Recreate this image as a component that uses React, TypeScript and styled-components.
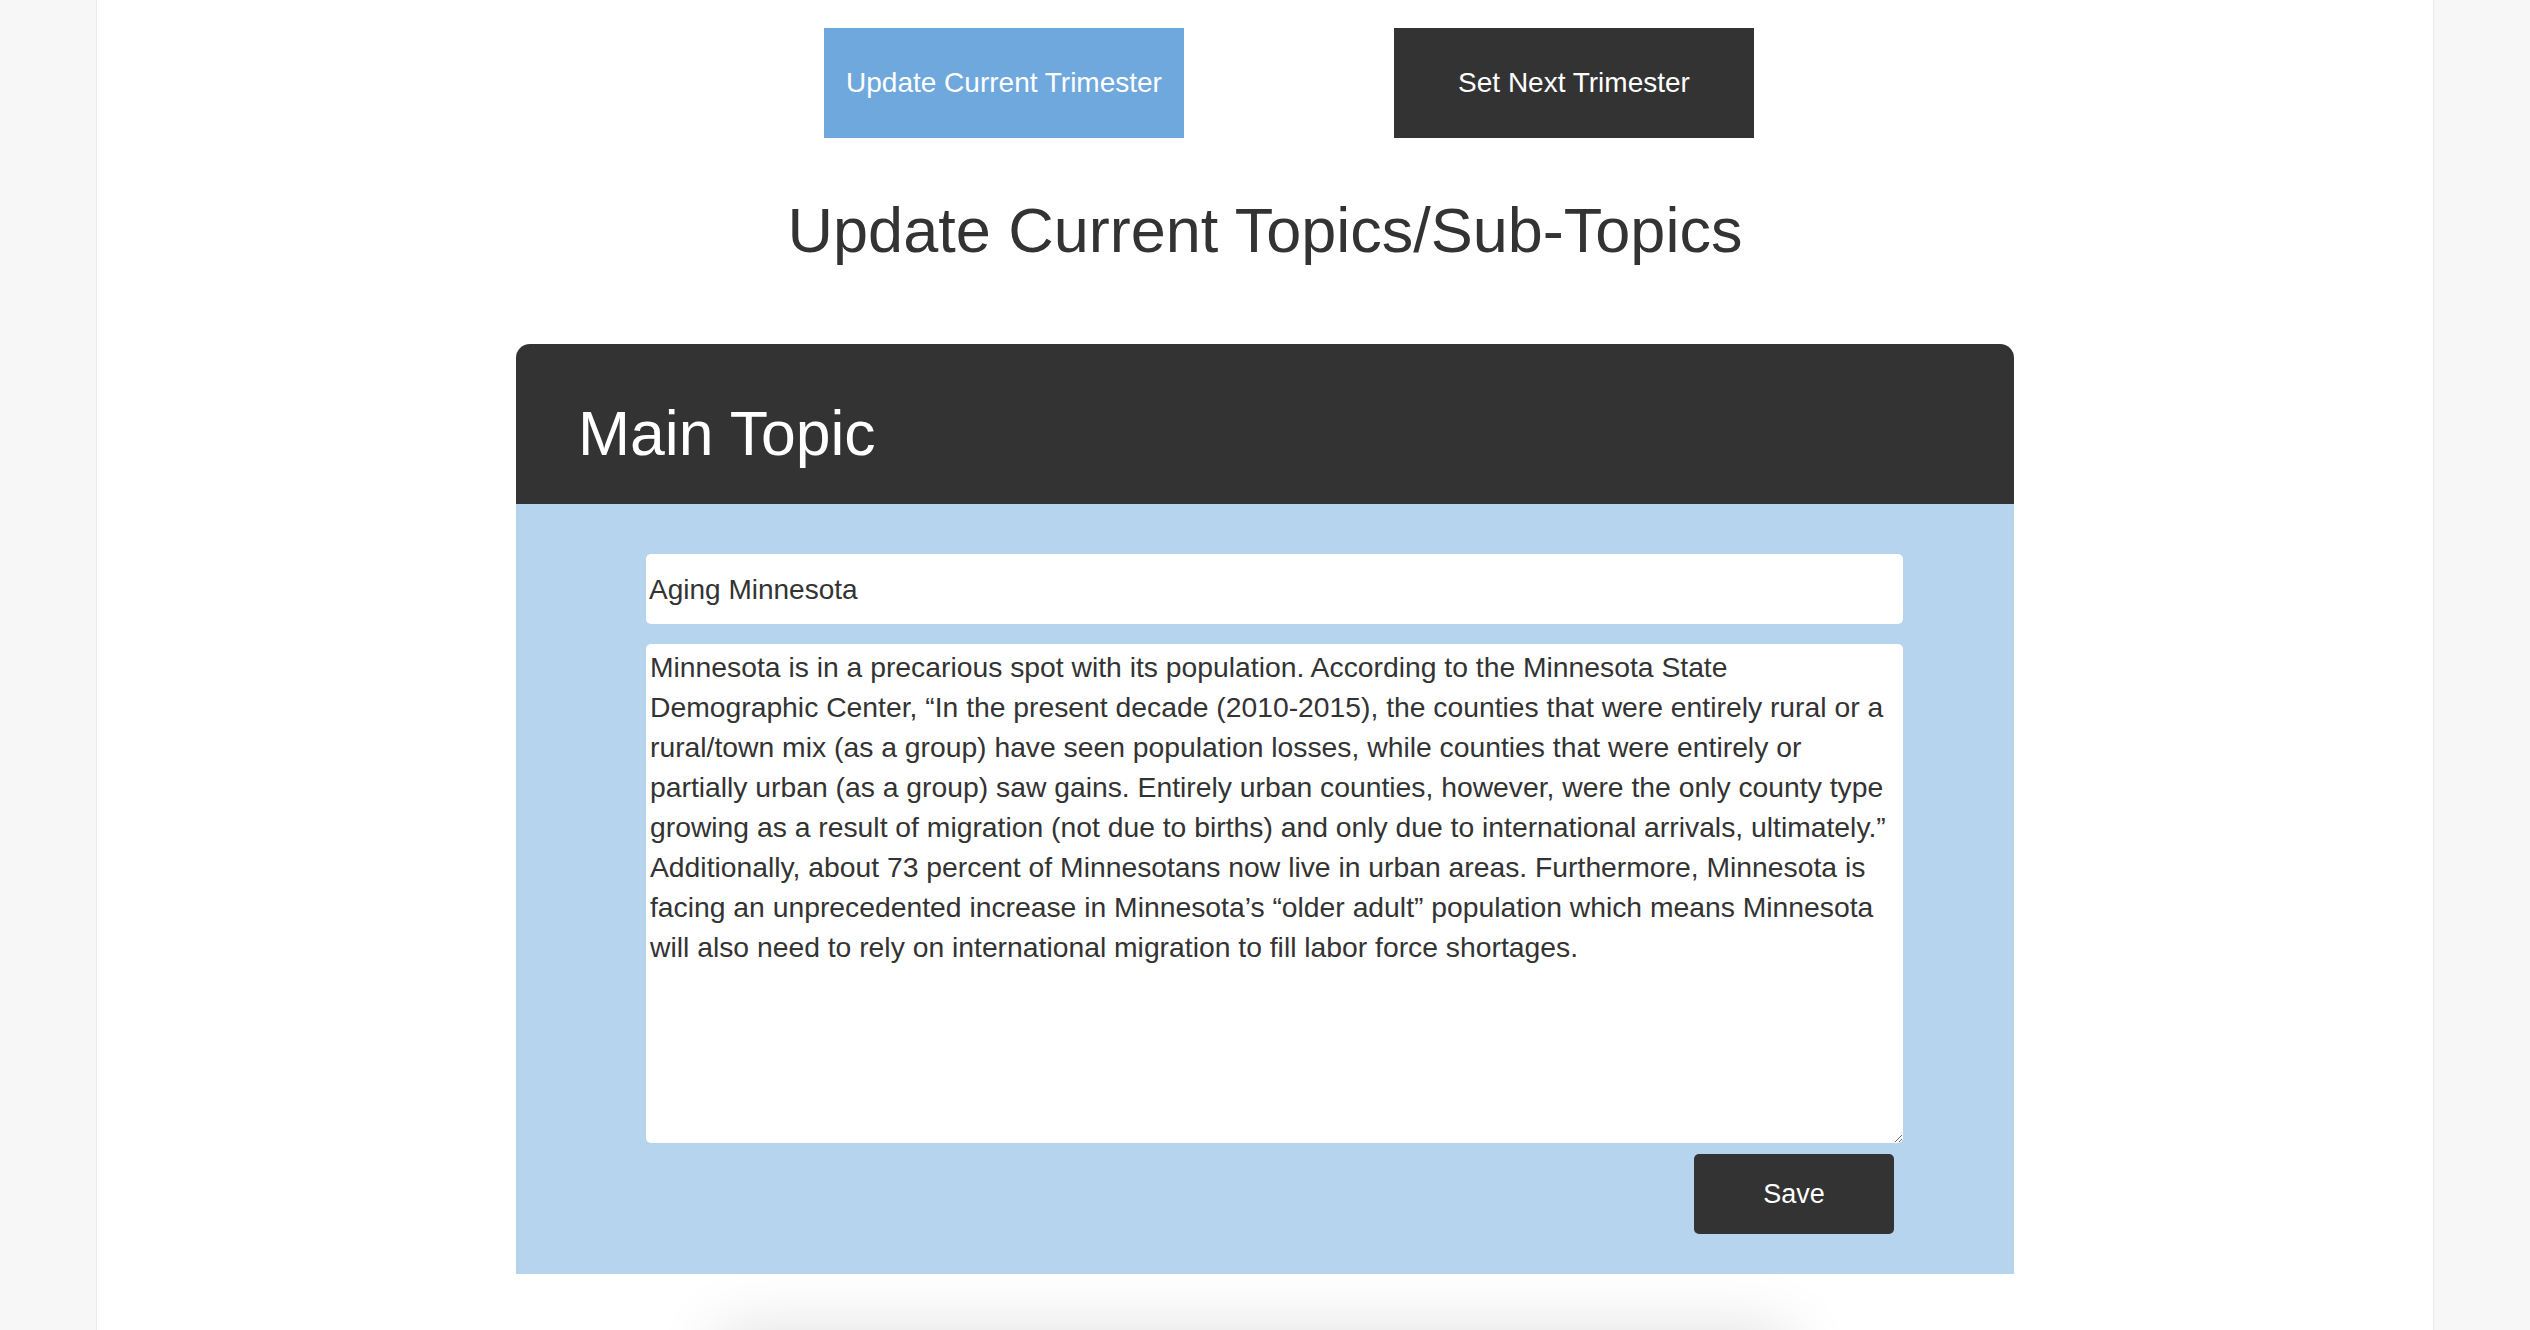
import React from "react";
import styled, { createGlobalStyle } from "styled-components";

const GlobalStyle = createGlobalStyle`
  html, body {
    margin: 0;
    padding: 0;
    background: #f7f7f7;
    font-family: "Liberation Sans", Arial, Helvetica, sans-serif;
    color: #333333;
  }
  * { box-sizing: border-box; }
`;

const Page = styled.div`
  width: 2338px;
  margin: 0 auto;
  min-height: 1600px;
  background: #ffffff;
  border-left: 1px solid #ebebeb;
  border-right: 1px solid #ebebeb;
  display: flex;
  flex-direction: column;
  align-items: center;
  padding-top: 28px;
`;

const ButtonRow = styled.div`
  display: flex;
  justify-content: center;
  gap: 210px;
  padding-left: 48px;
  align-self: stretch;
`;

const TrimesterButton = styled.button<{ $active?: boolean }>`
  width: 360px;
  height: 110px;
  border: none;
  border-radius: 0;
  background: ${(p) => (p.$active ? "#6fa8dc" : "#333333")};
  color: #ffffff;
  font-family: "Liberation Sans", Arial, Helvetica, sans-serif;
  font-size: 28px;
  cursor: pointer;
`;

const Heading = styled.h1`
  margin: 61px 0 0;
  font-size: 63px;
  line-height: 63px;
  font-weight: 400;
  color: #333333;
  text-align: center;
`;

const Panel = styled.section`
  position: relative;
  z-index: 1;
  width: 1498px;
  margin-top: 82px;
  display: flex;
  flex-direction: column;
`;

const PanelHeader = styled.header`
  height: 160px;
  background: #333333;
  border-radius: 14px 14px 0 0;
  padding: 58px 62px 0;
`;

const PanelTitle = styled.h2`
  margin: 0;
  font-size: 62.5px;
  line-height: 62.5px;
  font-weight: 400;
  color: #ffffff;
`;

const PanelBody = styled.form`
  background: #b6d4ee;
  padding: 50px 111px 40px 130px;
  display: flex;
  flex-direction: column;
`;

const TitleInput = styled.input`
  width: 100%;
  height: 70px;
  border: none;
  border-radius: 5px;
  background: #ffffff;
  padding: 2px 3px 0;
  font-family: "Liberation Sans", Arial, Helvetica, sans-serif;
  font-size: 28px;
  color: #333333;
  outline: none;
`;

const BodyText = styled.textarea`
  width: 100%;
  height: 499px;
  margin-top: 20px;
  border: none;
  border-radius: 5px;
  background: #ffffff;
  padding: 3px 9px 3px 4px;
  font-family: "Liberation Sans", Arial, Helvetica, sans-serif;
  font-size: 28.3px;
  line-height: 40px;
  color: #333333;
  outline: none;
  resize: vertical;
  overflow: hidden;
`;

const Actions = styled.div`
  display: flex;
  justify-content: flex-end;
  padding-right: 9px;
  margin-top: 11px;
`;

const SaveButton = styled.button`
  width: 200px;
  height: 80px;
  border: none;
  border-radius: 5px;
  background: #333333;
  color: #ffffff;
  font-family: "Liberation Sans", Arial, Helvetica, sans-serif;
  font-size: 27px;
  cursor: pointer;
`;

const NextCard = styled.div`
  width: 1070px;
  height: 400px;
  margin-top: 56px;
  margin-right: 22px;
  background: #ffffff;
  box-shadow: 0 0 60px rgba(0, 0, 0, 0.13);
`;

const paragraph =
  "Minnesota is in a precarious spot with its population. According to the Minnesota State Demographic Center, \u201CIn the present decade (2010-2015), the counties that were entirely rural or a rural/town mix (as a group) have seen population losses, while counties that were entirely or partially urban (as a group) saw gains. Entirely urban counties, however, were the only county type growing as a result of migration (not due to births) and only due to international arrivals, ultimately.\u201D Additionally, about 73 percent of Minnesotans now live in urban areas. Furthermore, Minnesota is facing an unprecedented increase in Minnesota\u2019s \u201Colder adult\u201D population which means Minnesota will also need to rely on international migration to fill labor force shortages.";

export default function App() {
  return (
    <>
      <GlobalStyle />
      <Page>
        <ButtonRow>
          <TrimesterButton $active>Update Current Trimester</TrimesterButton>
          <TrimesterButton>Set Next Trimester</TrimesterButton>
        </ButtonRow>
        <Heading>Update Current Topics/Sub-Topics</Heading>
        <Panel>
          <PanelHeader>
            <PanelTitle>Main Topic</PanelTitle>
          </PanelHeader>
          <PanelBody onSubmit={(e) => e.preventDefault()}>
            <TitleInput defaultValue="Aging Minnesota" />
            <BodyText defaultValue={paragraph} spellCheck={false} />
            <Actions>
              <SaveButton type="submit">Save</SaveButton>
            </Actions>
          </PanelBody>
        </Panel>
        <NextCard />
      </Page>
    </>
  );
}
